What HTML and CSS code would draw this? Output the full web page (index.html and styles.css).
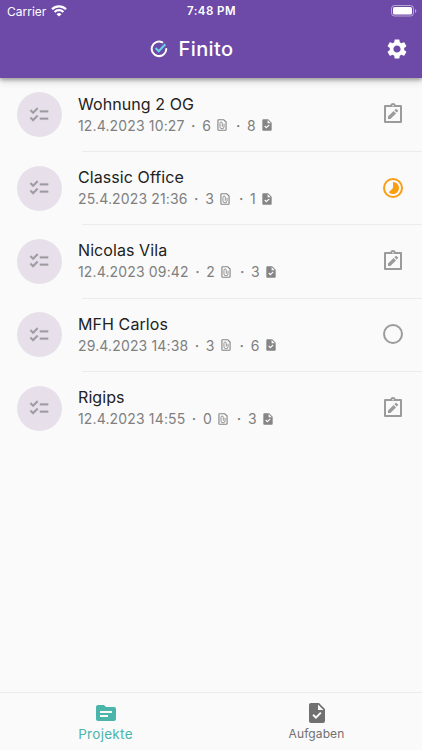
FILE: index.html
```html
<!DOCTYPE html>
<html lang="de">
<head>
<meta charset="utf-8">
<title>Finito</title>
<link rel="stylesheet" href="styles.css">
</head>
<body>
<svg class="defs" aria-hidden="true">
  <symbol id="checklist" viewBox="0 0 24 24"><path d="M22 7h-9v2h9V7zm0 8h-9v2h9v-2zM5.540 11L2 7.460l1.410-1.410 2.120 2.120 4.240-4.240 1.410 1.410L5.540 11zm0 8L2 15.460l1.410-1.410 2.120 2.120 4.240-4.240 1.410 1.410L5.540 19z" stroke="currentColor" stroke-width=".3"/></symbol>
  <symbol id="attach" viewBox="0 0 24 24"><path fill="none" stroke="currentColor" stroke-width="1.900" d="M15 3H6a1 1 0 0 0-1 1v16a1 1 0 0 0 1 1h12a1 1 0 0 0 1-1V7z"/><path fill="none" stroke="currentColor" stroke-width="1.500" d="M15.500 10v5a3.500 3.500 0 0 1-7 0V9a2 2 0 0 1 4 0v6"/></symbol>
  <symbol id="task" viewBox="0 0 24 24"><path d="M14 2H6c-1.100 0-1.990.9-1.990 2L4 20c0 1.100.89 2 1.990 2H18c1.100 0 2-.9 2-2V8l-6-6zm-3.060 16L7.400 14.460l1.410-1.410 2.120 2.120 4.240-4.240 1.410 1.410L10.940 18zM13 9V3.500L18.500 9H13z"/></symbol>
  <symbol id="edit" viewBox="0 0 24 24"><path fill="none" stroke="currentColor" stroke-width="2" stroke-linejoin="round" d="M4 4h16v16H4z"/><path d="M9.200 3a3 3 0 0 1 5.600 0v2H9.200z"/><circle cx="12" cy="3.700" r=".8" fill="#fafafa"/><path d="M7 14.600V17h2.400l5.600-5.600L12.600 9zM17 9.300a.6.600 0 0 0 0-.8L15.500 7a.6.600 0 0 0-.8 0l-1.300 1.300 2.300 2.300z"/></symbol>
  <symbol id="progress" viewBox="0 0 24 24"><circle cx="12" cy="12" r="9" fill="none" stroke="currentColor" stroke-width="2"/><path d="M12 12V6a6 6 0 1 1-4.240 10.240z"/></symbol>
  <symbol id="open" viewBox="0 0 24 24"><circle cx="12" cy="12" r="9" fill="none" stroke="currentColor" stroke-width="2"/></symbol>
  <symbol id="folder" viewBox="0 0 24 24"><path d="M20 6h-8l-2-2H4c-1.100 0-1.990.9-1.990 2L2 18c0 1.100.9 2 2 2h16c1.100 0 2-.9 2-2V8c0-1.100-.9-2-2-2zm-6 10H6v-2h8v2zm4-4H6v-2h12v2z"/></symbol>
  <symbol id="gear" viewBox="0 0 24 24"><path d="M19.140 12.940c.04-.3.060-.61.060-.94 0-.32-.02-.64-.07-.94l2.030-1.580c.18-.14.23-.41.12-.61l-1.920-3.320c-.12-.22-.37-.29-.59-.22l-2.390.96c-.5-.38-1.030-.7-1.620-.94l-.36-2.540c-.04-.24-.24-.41-.48-.41h-3.840c-.24 0-.43.17-.47.41l-.36 2.540c-.59.24-1.130.57-1.620.94l-2.390-.96c-.22-.08-.47 0-.59.22L2.740 8.870c-.12.21-.08.47.12.61l2.030 1.580c-.05.3-.09.63-.09.94s.02.64.07.94l-2.030 1.580c-.18.14-.23.41-.12.61l1.920 3.320c.12.22.37.29.59.22l2.390-.96c.5.38 1.030.7 1.620.94l.36 2.540c.05.24.24.41.48.41h3.840c.24 0 .44-.17.47-.41l.36-2.540c.59-.24 1.130-.56 1.620-.94l2.390.96c.22.08.47 0 .59-.22l1.920-3.320c.12-.22.07-.47-.12-.61l-2.010-1.580zM12 15.600c-1.980 0-3.600-1.620-3.600-3.600s1.620-3.600 3.600-3.600 3.600 1.620 3.600 3.600-1.620 3.600-3.600 3.600z"/></symbol>
</svg>
<div class="app">
  <header class="header">
    <div class="status">
      <div class="carrier"><span>Carrier</span>
        <svg class="wifi" viewBox="0 0 16 12"><path fill="none" stroke="#fff" stroke-width="2.200" d="M1 4.300a10 10 0 0 1 14 0M3.600 7a6.300 6.300 0 0 1 8.800 0"/><path d="M8 11.600L5.500 9.200a3.600 3.600 0 0 1 5 0z"/></svg>
      </div>
      <div class="time">7:48 PM</div>
      <svg class="battery" viewBox="0 0 26 12"><rect x=".5" y=".5" width="22" height="10.500" rx="3" fill="none" stroke="#fff" stroke-opacity=".5"/><rect x="2" y="2" width="19" height="7.500" rx="1.600"/><path d="M24 4v4q1.300-.6 1.300-2T24 4" opacity=".5"/></svg>
    </div>
    <div class="toolbar">
      <div class="brand">
        <svg class="logo" viewBox="0 0 18 18"><path fill="none" stroke="#fff" stroke-width="2" stroke-linecap="round" d="M12.300 2.300A7.300 7.300 0 1 0 16.300 9"/><path fill="none" stroke="#66d5e5" stroke-width="2.100" d="M5.600 8.100l3.100 3.100 6.600-6.900"/></svg>
        <h1>Finito</h1>
      </div>
      <svg class="gear"><use href="#gear"/></svg>
    </div>
  </header>
  <main class="list">
    <div class="row"><div class="avatar"><svg><use href="#checklist"/></svg></div><div class="content"><div class="info"><h2>Wohnung 2 OG</h2><p><span>12.4.2023 10:27</span><i>·</i><span>6</span><svg><use href="#attach"/></svg><i>·</i><span>8</span><svg><use href="#task"/></svg></p></div><svg class="state"><use href="#edit"/></svg></div></div>
    <div class="row"><div class="avatar"><svg><use href="#checklist"/></svg></div><div class="content"><div class="info"><h2>Classic Office</h2><p><span>25.4.2023 21:36</span><i>·</i><span>3</span><svg><use href="#attach"/></svg><i>·</i><span>1</span><svg><use href="#task"/></svg></p></div><svg class="state active"><use href="#progress"/></svg></div></div>
    <div class="row"><div class="avatar"><svg><use href="#checklist"/></svg></div><div class="content"><div class="info"><h2>Nicolas Vila</h2><p><span>12.4.2023 09:42</span><i>·</i><span>2</span><svg><use href="#attach"/></svg><i>·</i><span>3</span><svg><use href="#task"/></svg></p></div><svg class="state"><use href="#edit"/></svg></div></div>
    <div class="row"><div class="avatar"><svg><use href="#checklist"/></svg></div><div class="content"><div class="info"><h2>MFH Carlos</h2><p><span>29.4.2023 14:38</span><i>·</i><span>3</span><svg><use href="#attach"/></svg><i>·</i><span>6</span><svg><use href="#task"/></svg></p></div><svg class="state"><use href="#open"/></svg></div></div>
    <div class="row"><div class="avatar"><svg><use href="#checklist"/></svg></div><div class="content"><div class="info"><h2>Rigips</h2><p><span>12.4.2023 14:55</span><i>·</i><span>0</span><svg><use href="#attach"/></svg><i>·</i><span>3</span><svg><use href="#task"/></svg></p></div><svg class="state"><use href="#edit"/></svg></div></div>
  </main>
  <nav class="tabs">
    <div class="tab selected"><svg><use href="#folder"/></svg><span>Projekte</span></div>
    <div class="tab"><svg><use href="#task"/></svg><span>Aufgaben</span></div>
  </nav>
</div>
</body>
</html>
```
FILE: styles.css
```css
* { box-sizing: border-box; }
body { margin: 0; background: #fafafa; font-family: Inter, "Liberation Sans", sans-serif; }
h1, h2, p { margin: 0; font-weight: 400; }
svg { display: block; fill: currentColor; flex: none; }
.defs { position: absolute; width: 0; height: 0; }
.app { height: 750px; display: flex; flex-direction: column; overflow: hidden; }
.header { height: 78px; flex: none; background: #6d4aa8; color: #fff; box-shadow: 0 2px 4px rgba(0,0,0,.32), 0 4px 8px rgba(0,0,0,.1); }
.status { height: 22px; display: grid; grid-template-columns: 1fr auto 1fr; align-items: center; padding: 0 5px 0 7px; font-size: 12px; }
.carrier { display: flex; align-items: center; gap: 5px; letter-spacing: 0; }
.wifi { width: 16px; height: 12px; margin-top: -1px; }
.time { font-weight: 600; font-size: 11.5px; letter-spacing: .45px; margin-left: -1px; }
.battery { width: 26px; height: 12px; justify-self: end; margin-top: -1px; }
.toolbar { height: 54px; display: grid; grid-template-columns: 156px auto 1fr; align-items: center; padding-right: 13px; }
.brand { grid-column: 2; display: flex; align-items: center; gap: 10.500px; margin-left: -6px; }
.logo { width: 18px; height: 18px; }
h1 { font-size: 20px; font-weight: 500; letter-spacing: .4px; line-height: 24px; }
.gear { width: 24px; height: 24px; justify-self: end; }
.list { flex: 1; padding-top: .5px; }
.row { height: 73.350px; display: flex; align-items: center; padding-left: 16.500px; }
.avatar { width: 45px; height: 45px; margin-bottom: 1px; border-radius: 50%; background: #e7dfea; color: #9d9aa0; display: flex; align-items: center; justify-content: center; flex: none; }
.avatar svg { width: 22px; height: 22px; }
.content { flex: 1; height: 100%; margin-left: 16.500px; padding: 0 17px 1px 0; display: flex; align-items: center; justify-content: space-between; background: linear-gradient(#ececec, #ececec) 4px 100% / 100% 1px no-repeat; }
.row:last-child .content { background: none; }
.info h2 { font-size: 16px; line-height: 21px; letter-spacing: .08px; color: #222; }
.info p { display: flex; align-items: center; height: 21px; font-size: 14px; color: #7f7f7f; letter-spacing: .15px; }
.info i { font-style: normal; font-weight: 600; width: 17.500px; text-align: center; }
.info p svg { width: 14px; height: 14px; margin-left: 4.500px; color: #858585; }
.state { width: 24px; height: 24px; margin-bottom: 1px; color: #9b9b9b; }
.active { color: #f99d13; }
.tabs { height: 58px; flex: none; display: flex; border-top: 1px solid #ececec; background: #fafafa; }
.tab { flex: 1; display: flex; flex-direction: column; align-items: center; padding-top: 8px; color: #707070; font-size: 12px; line-height: 18px; letter-spacing: .1px; }
.tab svg { width: 24px; height: 24px; }
.tab.selected { color: #4bb5aa; font-size: 13.500px; letter-spacing: .3px; }
```
